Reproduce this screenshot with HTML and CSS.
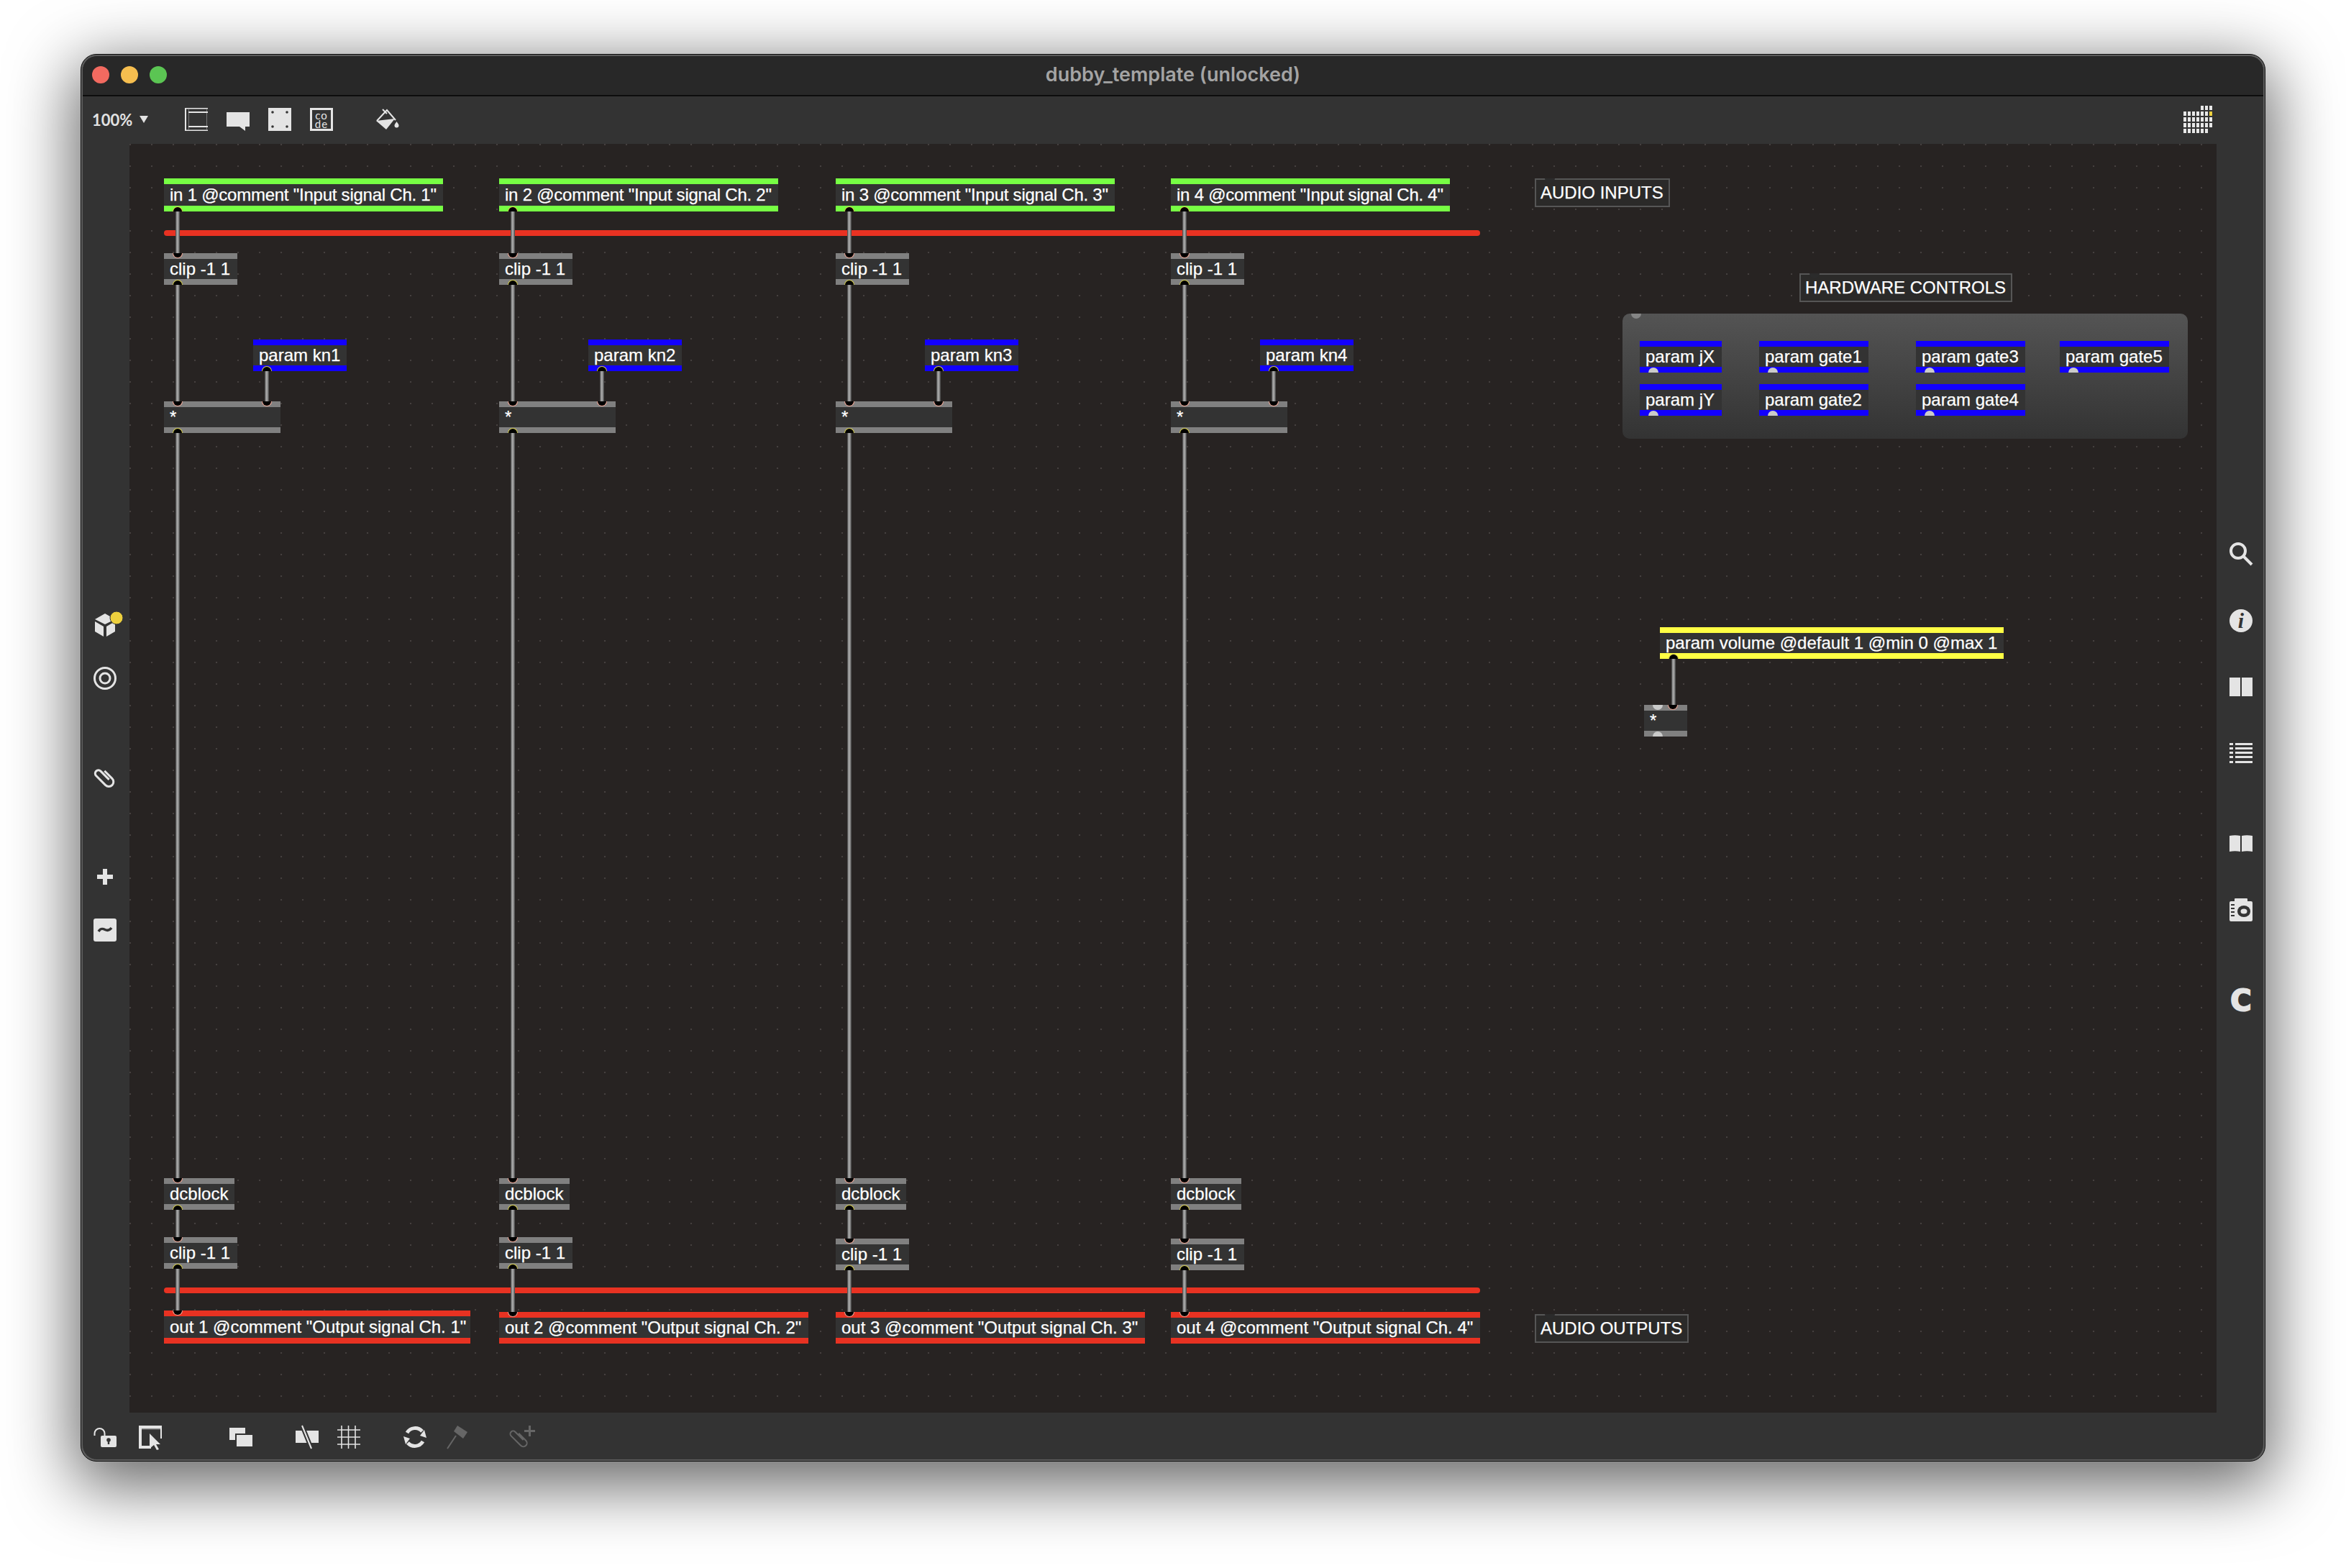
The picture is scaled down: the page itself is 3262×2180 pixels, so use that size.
FILE: index.html
```html
<!DOCTYPE html>
<html>
<head>
    <title>dubby_template (unlocked)</title>
    <link rel="stylesheet" href="styles.css">
</head>
<body>
<div class="window">
<div class="frame">
    <div class="titlebar">
        <div class="lights"><span class="light red"></span><span class="light yellow"></span><span class="light green"></span></div>
        <div class="title">dubby_template (unlocked)</div>
    </div>

    <div class="toolbar">
        <div class="zoom-menu"><span>100%</span><i class="tri"></i></div>
        <div class="tool-group">
            <svg class="icon" viewBox="0 0 32 32"><rect x="5" y="2" width="1" height="28" fill="#777"/><rect x="30" y="2" width="1" height="28" fill="#777"/><rect width="2" height="32"/><rect width="32" height="1.5"/><rect x="5" y="5" width="27" height="2"/><rect x="5" y="25" width="27" height="2"/><rect y="30.5" width="32" height="1.5"/></svg>
            <svg class="icon" viewBox="0 0 32 32"><path d="M0 6h32v20h-6v6l-8-6H0z"/></svg>
            <svg class="icon" viewBox="0 0 32 32"><path fill-rule="evenodd" d="M0 0h32v32H0z"/><circle class="hole" cx="6" cy="6" r="1.8"/><circle class="hole" cx="26" cy="6" r="1.8"/><circle class="hole" cx="6" cy="26" r="1.8"/><circle class="hole" cx="26" cy="26" r="1.8"/></svg>
            <div class="code-icon"><span>co</span><span>de</span></div>
        </div>
        <svg class="icon bucket" viewBox="0 0 32 32"><path class="line" d="M9 2l6 6M1 18L15 3l12 14"/><path d="M0 18l26-3-12 15z"/><path d="M28.500 19c2 3 3 4 3 5.500a3 3 0 0 1-6 0c0-1.500 1-2.500 3-5.500z"/></svg>
        <div class="lib-grid">
            <i class="off"></i><i class="off"></i><i class="off"></i><i class="off"></i><i></i><i></i><i></i>
            <i></i><i></i><i></i><i></i><i></i><i></i><i class="on"></i>
            <i></i><i></i><i></i><i></i><i></i><i></i><i></i>
            <i></i><i></i><i></i><i></i><i></i><i></i><i></i>
            <i></i><i></i><i></i><i></i><i></i><i></i><i class="off"></i>
        </div>
    </div>

    <div class="middle">
        <div class="sidebar left-bar">
            <div class="side-group">
                <svg class="icon cube" viewBox="0 0 32 32"><path d="M14 0l14 8-14 7L0 8z"/><path d="M0 11l12 7v14L0 25z"/><path d="M16 18l12-7v14l-12 7z"/><circle class="badge" cx="30" cy="6" r="9"/></svg>
                <svg class="icon" viewBox="0 0 32 32"><circle class="line thick" cx="16" cy="16" r="14.500"/><circle class="line thick" cx="16" cy="16" r="7"/></svg>
            </div>
            <div class="side-group">
                <svg class="icon" viewBox="0 0 32 32"><g transform="rotate(-45 16 16)"><path class="line thick" d="M22 9v15a6.500 6.500 0 0 1-13 0V5.500a4.500 4.500 0 0 1 9 0V22"/></g></svg>
            </div>
            <div class="side-group">
                <svg class="icon" viewBox="0 0 32 32"><rect x="5" y="13" width="22" height="6"/><rect x="13" y="5" width="6" height="22"/></svg>
                <svg class="icon" viewBox="0 0 32 32"><rect width="32" height="32" rx="3"/><path class="wave" d="M7 18c3-5 6-4 9-2.500s6 1.500 9-2.500"/></svg>
            </div>
        </div>

        <div class="canvas">
            <div class="bus bus-in"></div>
            <div class="bus bus-out"></div>

            <div class="channel ch1">
                <div class="cord c-in"></div><div class="cord c-clip"></div><div class="cord c-knob"></div><div class="cord c-mul"></div><div class="cord c-dc"></div><div class="cord c-out"></div>
                <div class="obj inlet-obj row-in w-in">in 1 @comment "Input signal Ch. 1"<b class="port out"></b></div>
                <div class="obj row-clip w-clip">clip -1 1<b class="port in"></b><b class="port out"></b></div>
                <div class="obj param row-knob w-knob">param kn1<b class="port out"></b></div>
                <div class="obj row-mul w-mul">*<b class="port in"></b><b class="port in right"></b><b class="port out"></b></div>
                <div class="obj row-dc w-dc">dcblock<b class="port in"></b><b class="port out"></b></div>
                <div class="obj row-clip2 w-clip">clip -1 1<b class="port in"></b><b class="port out"></b></div>
                <div class="obj outlet-obj row-out-first">out 1 @comment "Output signal Ch. 1"<b class="port in"></b></div>
            </div>

            <div class="channel ch2">
                <div class="cord c-in"></div><div class="cord c-clip"></div><div class="cord c-knob"></div><div class="cord c-mul"></div><div class="cord c-dc"></div><div class="cord c-out"></div>
                <div class="obj inlet-obj row-in w-in">in 2 @comment "Input signal Ch. 2"<b class="port out"></b></div>
                <div class="obj row-clip w-clip">clip -1 1<b class="port in"></b><b class="port out"></b></div>
                <div class="obj param row-knob w-knob">param kn2<b class="port out"></b></div>
                <div class="obj row-mul w-mul">*<b class="port in"></b><b class="port in right"></b><b class="port out"></b></div>
                <div class="obj row-dc w-dc">dcblock<b class="port in"></b><b class="port out"></b></div>
                <div class="obj row-clip2 w-clip">clip -1 1<b class="port in"></b><b class="port out"></b></div>
                <div class="obj outlet-obj row-out w-out">out 2 @comment "Output signal Ch. 2"<b class="port in"></b></div>
            </div>

            <div class="channel ch3">
                <div class="cord c-in"></div><div class="cord c-clip"></div><div class="cord c-knob"></div><div class="cord c-mul"></div><div class="cord c-dc"></div><div class="cord c-out"></div>
                <div class="obj inlet-obj row-in w-in">in 3 @comment "Input signal Ch. 3"<b class="port out"></b></div>
                <div class="obj row-clip w-clip">clip -1 1<b class="port in"></b><b class="port out"></b></div>
                <div class="obj param row-knob w-knob">param kn3<b class="port out"></b></div>
                <div class="obj row-mul w-mul">*<b class="port in"></b><b class="port in right"></b><b class="port out"></b></div>
                <div class="obj row-dc w-dc">dcblock<b class="port in"></b><b class="port out"></b></div>
                <div class="obj row-clip2 low w-clip">clip -1 1<b class="port in"></b><b class="port out"></b></div>
                <div class="obj outlet-obj row-out w-out">out 3 @comment "Output signal Ch. 3"<b class="port in"></b></div>
            </div>

            <div class="channel ch4">
                <div class="cord c-in"></div><div class="cord c-clip"></div><div class="cord c-knob"></div><div class="cord c-mul"></div><div class="cord c-dc"></div><div class="cord c-out"></div>
                <div class="obj inlet-obj row-in w-in">in 4 @comment "Input signal Ch. 4"<b class="port out"></b></div>
                <div class="obj row-clip w-clip">clip -1 1<b class="port in"></b><b class="port out"></b></div>
                <div class="obj param row-knob w-knob">param kn4<b class="port out"></b></div>
                <div class="obj row-mul w-mul">*<b class="port in"></b><b class="port in right"></b><b class="port out"></b></div>
                <div class="obj row-dc w-dc">dcblock<b class="port in"></b><b class="port out"></b></div>
                <div class="obj row-clip2 low w-clip">clip -1 1<b class="port in"></b><b class="port out"></b></div>
                <div class="obj outlet-obj row-out w-out">out 4 @comment "Output signal Ch. 4"<b class="port in"></b></div>
            </div>

            <div class="comment audio-in">AUDIO INPUTS<b class="port ghost"></b></div>
            <div class="comment hw-label">HARDWARE CONTROLS<b class="port ghost"></b></div>
            <div class="comment audio-out">AUDIO OUTPUTS<b class="port ghost"></b></div>

            <div class="panel">
                <b class="port panel-dot"></b>
                <div class="obj param hw col-a row-a w-jx">param jX<b class="port free"></b></div>
                <div class="obj param hw col-b row-a w-gate">param gate1<b class="port free"></b></div>
                <div class="obj param hw col-c row-a w-gate">param gate3<b class="port free"></b></div>
                <div class="obj param hw col-d row-a w-gate">param gate5<b class="port free"></b></div>
                <div class="obj param hw col-a row-b w-jx">param jY<b class="port free"></b></div>
                <div class="obj param hw col-b row-b w-gate">param gate2<b class="port free"></b></div>
                <div class="obj param hw col-c row-b w-gate">param gate4<b class="port free"></b></div>
            </div>

            <div class="cord c-volume"></div>
            <div class="obj volume">param volume @default 1 @min 0 @max 1<b class="port out"></b></div>
            <div class="obj volume-mul">*<b class="port free-in"></b><b class="port in vol-right"></b><b class="port free"></b></div>
        </div>

        <div class="sidebar right-bar">
            <div class="side-group">
                <svg class="icon" viewBox="0 0 32 32"><circle class="line bold" cx="12" cy="11" r="10"/><path class="line bold" d="M19 18l12 12"/></svg>
                <div class="info-icon">i</div>
                <svg class="icon" viewBox="0 0 32 32"><rect y="3" width="15" height="26"/><rect x="17" y="3" width="15" height="26"/></svg>
                <svg class="icon" viewBox="0 0 32 32"><rect y="2" width="5" height="3"/><rect x="8" y="2" width="24" height="3"/><rect y="8" width="5" height="3"/><rect x="8" y="8" width="24" height="3"/><rect y="14" width="5" height="3"/><rect x="8" y="14" width="24" height="3"/><rect y="20" width="5" height="3"/><rect x="8" y="20" width="24" height="3"/><rect y="27" width="5" height="3"/><rect x="8" y="27" width="24" height="3"/></svg>
            </div>
            <div class="side-group">
                <svg class="icon" viewBox="0 0 32 32"><path d="M0 5q8-1.500 15 0v22q-7-1.500-15 0z"/><path d="M17 5q7-1.500 15 0v22q-8-1.500-15 0z"/></svg>
                <svg class="icon" viewBox="0 0 32 32"><path d="M7 4V1q0-1 1-1h16q1 0 1 1v3h5q2 0 2 2v24q0 2-2 2H2q-2 0-2-2V6q0-2 2-2z"/><ellipse class="hole" cx="20" cy="18" rx="9" ry="8"/><ellipse cx="20" cy="18" rx="4.500" ry="3.500"/><path class="hole" d="M2 8h5v2H2zM2 13h5v2H2zM2 18h5v2H2zM2 23h5v2H2z"/></svg>
            </div>
            <div class="side-group">
                <div class="c-icon">C</div>
            </div>
        </div>
    </div>

    <div class="bottombar">
        <div class="tool-group gap-select">
            <svg class="icon" viewBox="0 0 32 28"><path class="line" stroke-width="3" fill="none" d="M1.500 12V9a7 7 0 0 1 14 0v3"/><rect x="10" y="12" width="22" height="16" rx="2"/><circle class="hole" cx="21" cy="18" r="2.800"/><rect class="hole" x="19.800" y="18" width="2.400" height="6"/></svg>
            <svg class="icon" viewBox="0 0 32 32"><path fill-rule="evenodd" d="M0 0h32v18h-2V4H4v24h13v4H0z"/><rect x="4" y="4" width="26" height="1.500" fill="#888"/><path d="M15 11l15 15-6 0 4 7-3 1-4-7-6 5z"/></svg>
        </div>
        <svg class="icon ml-stack" viewBox="0 0 32 32"><rect y="3" width="22" height="17"/><rect class="hole" x="8" y="11" width="24" height="18"/><rect x="10" y="13" width="22" height="16"/></svg>
        <div class="tool-group ml-grid">
            <svg class="icon" viewBox="0 0 32 32"><rect y="7" width="32" height="17"/><path class="slash-back" d="M9 0l13 32"/><path class="slash" d="M9 0l13 32"/></svg>
            <svg class="icon" viewBox="0 0 32 32"><path class="line thin" d="M6 0v32M15.500 0v32M25 0v32"/><path class="line thin" d="M0 6h32M0 16h32M0 26h32"/></svg>
        </div>
        <div class="tool-group ml-refresh">
            <svg class="icon" viewBox="0 0 32 32"><path class="line refresh" d="M5 10a13 13 0 0 1 21-2M27 22a13 13 0 0 1-21 2"/><path d="M32 17l-3-11-6 8zM0 15l3 11 6-8z"/></svg>
            <svg class="icon dim" viewBox="0 0 32 32"><path d="M10 8l5-8 14 9-6 9z"/><path class="line" stroke-width="3" d="M13 14L1 32"/></svg>
        </div>
        <svg class="icon dim ml-clip" viewBox="0 0 32 32"><g transform="rotate(-45 11 20)"><path class="line" stroke-width="2.200" d="M17 13v14a5 5 0 0 1-10 0V8a4 4 0 0 1 8 0v16"/></g><rect x="24" y="0" width="3" height="15"/><rect x="18" y="6" width="15" height="3"/></svg>
    </div>
</div>
</div>
</body>
</html>
```

FILE: styles.css
```css
html, body { margin: 0; background: #fff; }
body { padding: 75px 112px 0; height: 2180px; box-sizing: border-box; overflow: hidden; font-family: "Liberation Sans", Arial, sans-serif; }

.window { height: 1957px; box-sizing: border-box; padding: 2px; border: 1px solid #0c0c0c; border-radius: 22px; background: #5c5c5c; box-shadow: 0 24px 90px 10px rgba(0, 0, 0, 0.6); }
.frame { height: 100%; display: flex; flex-direction: column; border-radius: 20px; overflow: hidden; background: #333; }

/* title bar */
.titlebar { position: relative; flex: none; height: 54px; box-sizing: content-box; padding-bottom: 0; border-bottom: 2px solid #0d0d0d; background: #282828; display: flex; align-items: center; justify-content: center; }
.lights { position: absolute; left: 13px; top: 14px; display: flex; gap: 16px; }
.light { width: 24px; height: 24px; border-radius: 50%; }
.red { background: #f26a60; }
.yellow { background: #f6be4f; }
.green { background: #5bc553; }
.title { margin-bottom: 3px; font-family: Inter, sans-serif; font-weight: 600; font-size: 27px; color: #a4a4a4; }

/* toolbars */
.toolbar { flex: none; height: 66px; box-sizing: border-box; padding: 0 71px 2px 13px; display: flex; align-items: center; }
.zoom-menu { display: flex; align-items: center; width: 78px; margin-right: 51px; font-family: Lato, sans-serif; font-weight: 700; font-size: 22px; color: #e2e2e2; }
.tri { margin-left: 10px; border-left: 6px solid transparent; border-right: 6px solid transparent; border-top: 10px solid #e2e2e2; }
.tool-group { display: flex; gap: 26px; align-items: center; }
.icon { display: block; flex: none; width: 32px; height: 32px; fill: #e4e4e4; overflow: visible; }
.line { fill: none; stroke: #e4e4e4; stroke-width: 2; }
.thick { stroke-width: 3px; }
.bold { stroke-width: 4px; }
.thin { stroke-width: 1.6px; }
.hole { fill: #333; }
.dim { fill: #666; }
.dim .line { stroke: #666; }
.cube { margin-left: 2px; }
.badge { fill: #edd03e; stroke: #333; stroke-width: 1; }
.wave { fill: none; stroke: #333; stroke-width: 3.5; }
.code-icon { width: 32px; height: 32px; box-sizing: border-box; border: 3px solid #e4e4e4; display: flex; flex-direction: column; align-items: center; font-family: Lato, sans-serif; font-size: 15px; line-height: 12px; color: #e4e4e4; padding-top: 1px; letter-spacing: 1px; }
.bucket { margin-left: 60px; }
.lib-grid { margin-left: auto; display: grid; grid-template-columns: repeat(7, 4px); grid-auto-rows: 6px; gap: 2px; }
.lib-grid i { background: #e8e8e8; }
.lib-grid i.off { background: none; }
.lib-grid i.on { background: #edd03e; }

.bottombar { flex: none; height: 65px; box-sizing: border-box; padding: 3px 0 0 15px; display: flex; align-items: center; }
.gap-select { gap: 31px; }
.ml-stack { margin-left: 94px; }
.ml-grid { margin-left: 60px; gap: 26px; }
.ml-refresh { margin-left: 60px; gap: 28px; }
.ml-clip { margin-left: 58px; }
.slash-back { fill: none; stroke: #333; stroke-width: 6; }
.slash { fill: none; stroke: #e4e4e4; stroke-width: 2; }
.refresh { stroke-width: 5px; }

/* side bars */
.middle { flex: 1; display: flex; min-height: 0; }
.sidebar { flex: none; width: 65px; box-sizing: border-box; display: flex; flex-direction: column; }
.side-group { display: flex; flex-direction: column; }
.left-bar { padding: 653px 0 0 15px; gap: 106px; }
.left-bar .side-group { gap: 42px; }
.right-bar { padding: 555px 0 0 18px; gap: 94px; }
.right-bar .side-group { gap: 60px; }
.info-icon { width: 32px; height: 32px; border-radius: 50%; background: #e4e4e4; color: #333; font-family: "Liberation Serif", serif; font-style: italic; font-weight: 700; font-size: 30px; line-height: 32px; text-align: center; }
.c-icon { width: 32px; height: 32px; color: #e4e4e4; font-family: "DejaVu Sans", sans-serif; font-weight: 700; font-size: 40px; line-height: 32px; text-align: center; -webkit-text-stroke: 2px #e4e4e4; }

/* patcher canvas, nodes are placed by coordinate */
.canvas { position: relative; flex: 1; overflow: hidden; background-color: #272322; background-image: radial-gradient(circle at 1px 1px, #45403f 1px, transparent 1.6px); background-position: 30px 0; background-size: 30px 30px; }

.bus { position: absolute; left: 48px; width: 1830px; height: 8px; border-radius: 4px; background: #e83222; }
.bus-in { top: 120px; }
.bus-out { top: 1590px; }

.channel { position: absolute; top: 0; width: 440px; }
.ch1 { left: 48px; }
.ch2 { left: 514px; }
.ch3 { left: 982px; }
.ch4 { left: 1448px; }

.obj { position: absolute; box-sizing: border-box; height: 44px; padding: 0 8px; border-top: 8px solid #808080; border-bottom: 8px solid #808080; background: #333; color: #fff; font-size: 24px; line-height: 27px; white-space: nowrap; -webkit-text-stroke: 0.25px #fff; }
.inlet-obj { border-color: #77ff44; height: 46px; line-height: 30px; letter-spacing: -0.24px; }
.outlet-obj { border-color: #e83222; }
.param { border-color: #1200ff; }

.row-in { top: 48px; }
.row-clip { top: 152px; }
.row-knob { top: 272px; left: 124px; }
.row-mul { top: 358px; }
.row-dc { top: 1438px; }
.row-clip2 { top: 1520px; }
.row-clip2.low { top: 1522px; }
.row-out { top: 1624px; }
.row-out-first { top: 1622px; width: 426px; height: 46px; line-height: 29px; }

.w-in { width: 388px; }
.w-clip { width: 102px; }
.w-knob { width: 130px; }
.w-mul { width: 162px; }
.w-dc { width: 98px; }
.w-out { width: 430px; }

.cord { position: absolute; left: 16px; width: 6px; box-sizing: border-box; border-radius: 3px; background: linear-gradient(90deg, #3a3a3a, #aaa 35%, #999 65%, #3a3a3a); }
.c-in { top: 90px; height: 66px; }
.c-clip { top: 192px; height: 170px; }
.c-knob { left: 140px; top: 312px; height: 50px; }
.c-mul { top: 398px; height: 1044px; }
.c-dc { top: 1478px; height: 47px; }
.c-out { top: 1561px; height: 67px; }
.c-volume { left: 2144px; top: 712px; height: 72px; }

.port { position: absolute; left: 12px; width: 14px; height: 7px; box-sizing: border-box; background: #000; }
.port.in { top: -8px; border: 1.5px solid #eba494; border-top: 0; border-radius: 0 0 7px 7px; }
.port.out { bottom: -8px; border: 1.5px solid #d8d050; border-bottom: 0; border-radius: 7px 7px 0 0; }
.port.right { left: 136px; }
.port.vol-right { left: 33px; }
.port.free { bottom: -8px; background: #cacaca; border-radius: 7px 7px 0 0; }
.port.free-in { top: -8px; background: #cacaca; border-radius: 0 0 7px 7px; }
.port.ghost { top: -2px; background: #2b2b2b; border-radius: 0 0 7px 7px; }

.comment { position: absolute; box-sizing: border-box; height: 40px; padding: 0 6px; border: 2px solid #565656; background: #2b2a29; color: #fff; font-size: 24px; line-height: 35px; white-space: nowrap; -webkit-text-stroke: 0.25px #fff; }
.audio-in { left: 1954px; top: 48px; width: 188px; }
.hw-label { left: 2322px; top: 180px; width: 296px; }
.audio-out { left: 1954px; top: 1627px; width: 214px; }

.panel { position: absolute; left: 2076px; top: 236px; width: 786px; height: 174px; border-radius: 10px; background: linear-gradient(#545454, #333); }
.panel-dot { left: 12px; top: 0; background: #858585; border-radius: 0 0 7px 7px; }
.col-a { left: 24px; }
.col-b { left: 190px; }
.col-c { left: 408px; }
.col-d { left: 608px; }
.row-a { top: 38px; }
.row-b { top: 98px; }
.w-jx { width: 114px; }
.w-gate { width: 152px; }

.volume { left: 2128px; top: 672px; width: 478px; border-color: #ffff44; }
.volume-mul { left: 2106px; top: 780px; width: 60px; }
```
